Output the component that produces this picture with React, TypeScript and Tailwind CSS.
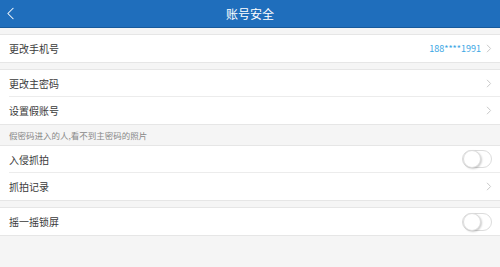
import { ChevronLeft } from "lucide-react";

const font = { fontFamily: '"Noto Sans CJK SC", "Noto Sans", sans-serif' };

function Chevron() {
  return (
    <svg width="6" height="9" viewBox="0 0 6 9" className="shrink-0">
      <path d="M1 0.8 L4.6 4.5 L1 8.2" fill="none" stroke="#c9c9c9" strokeWidth="1" />
    </svg>
  );
}

function Toggle() {
  return (
    <div className="relative w-[30px] h-[18px] rounded-full border border-[#dcdcdc] bg-white">
      <div className="absolute left-0 top-[-1px] w-[18px] h-[18px] rounded-full bg-white border border-[#dcdcdc] shadow-[1px_1px_2px_rgba(0,0,0,0.2)]" />
    </div>
  );
}

function Row({
  label,
  right,
  divider,
}: {
  label: string;
  right?: React.ReactNode;
  divider?: boolean;
}) {
  return (
    <div className="pl-[9px]">
      <div
        className={`flex items-center justify-between h-[27px] pr-[8px] ${
          divider ? "border-b border-[#ececec]" : ""
        }`}
      >
        <span className="text-[10px] text-[#3a3a3a]">{label}</span>
        {right}
      </div>
    </div>
  );
}

function Group({ children }: { children: React.ReactNode }) {
  return (
    <div className="bg-white border-y border-[#e6e6e6]">{children}</div>
  );
}

export default function App() {
  return (
    <div className="w-[500px] h-[267px] bg-[#f5f5f5] overflow-hidden" style={font}>
      <div className="relative h-[28px] bg-[#1f6ebc] border-b border-[#175a9c] flex items-center justify-center">
        <ChevronLeft className="absolute left-[0px] top-[3px] text-white" size={21} strokeWidth={1.2} />
        <span className="text-white text-[12px]">账号安全</span>
      </div>

      <div className="mt-[6px]">
        <Group>
          <Row
            label="更改手机号"
            right={
              <div className="flex items-center gap-[5px]">
                <span className="text-[9px] text-[#3aa6e4]">188****1991</span>
                <Chevron />
              </div>
            }
          />
        </Group>
      </div>

      <div className="mt-[6px]">
        <Group>
          <Row label="更改主密码" right={<Chevron />} divider />
          <Row label="设置假账号" right={<Chevron />} />
        </Group>
      </div>

      <div className="h-[20px] pl-[9px] flex items-center text-[8.5px] text-[#888]">
        假密码进入的人,看不到主密码的照片
      </div>

      <Group>
        <Row label="入侵抓拍" right={<Toggle />} divider />
        <Row label="抓拍记录" right={<Chevron />} />
      </Group>

      <div className="mt-[6px]">
        <Group>
          <Row label="摇一摇锁屏" right={<Toggle />} />
        </Group>
      </div>
    </div>
  );
}
